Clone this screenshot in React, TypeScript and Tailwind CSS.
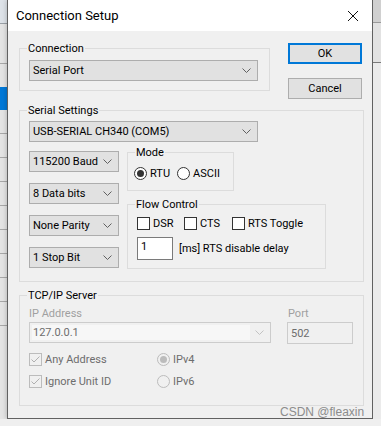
import React from "react";

const Chevron = ({ color = "#606060" }: { color?: string }) => (
  <svg width="9" height="5" viewBox="0 0 9 5" className="shrink-0">
    <polyline points="0.5,0.5 4.5,4.5 8.5,0.5" fill="none" stroke={color} strokeWidth="1" />
  </svg>
);

const Combo = ({ text, w }: { text: string; w: string }) => (
  <div className={`${w} h-[21px] flex items-center justify-between bg-[#e1e1e1] border border-[#adadad] pl-[3px] pr-[6px] text-[11px] leading-[13px] text-black`}>
    <span>{text}</span>
    <Chevron />
  </div>
);

const Radio = ({ checked, disabled, label }: { checked?: boolean; disabled?: boolean; label: string }) => (
  <div className={`flex items-center gap-[3px] text-[11px] leading-[13px] ${disabled ? "text-[#6d6d6d]" : "text-black"}`}>
    <div
      className={`w-[13px] h-[13px] rounded-full border flex items-center justify-center ${
        disabled ? "border-[#bcbcbc] bg-[#f0f0f0]" : "border-[#333333] bg-white"
      }`}
    >
      {checked && <div className={`w-[7px] h-[7px] rounded-full ${disabled ? "bg-[#bcbcbc]" : "bg-[#333333]"}`} />}
    </div>
    <span>{label}</span>
  </div>
);

const Check = ({ checked, disabled, label }: { checked?: boolean; disabled?: boolean; label: string }) => (
  <div className={`flex items-center gap-[3px] text-[11px] leading-[13px] ${disabled ? "text-[#6d6d6d]" : "text-black"}`}>
    <div
      className={`w-[13px] h-[13px] border flex items-center justify-center ${
        disabled ? "border-[#bcbcbc] bg-[#f0f0f0]" : "border-[#333333] bg-white"
      }`}
    >
      {checked && (
        <svg width="11" height="11" viewBox="0 0 11 11">
          <polyline points="1.5,5.5 4,8 9.5,2.5" fill="none" stroke={disabled ? "#b0b0b0" : "#333"} strokeWidth="1" />
        </svg>
      )}
    </div>
    <span>{label}</span>
  </div>
);

const Legend = ({ children }: { children: React.ReactNode }) => (
  <legend className="ml-[7px] px-[1px] text-[11px] leading-[13px] text-black">{children}</legend>
);

const LeftStrip = () => {
  const rows = [0, 1, 2, 3, 4, 5, 6, 7, 8];
  return (
    <div className="w-[7px] flex flex-col bg-[#e4e4e4]">
      <div className="h-[23px] bg-[#dde2e8]" />
      <div className="h-[1px] bg-[#9aa0a6]" />
      <div className="h-[39px]" />
      <div className="h-[1px] bg-[#a8a8a8]" />
      <div className="h-[23px]" />
      <div className="h-[23px] bg-[#0078d7]" />
      {rows.map((r) => (
        <div key={r} className="flex flex-col">
          <div className="h-[23px]" />
          <div className="h-[1px] bg-[#a8a8a8]" />
        </div>
      ))}
    </div>
  );
};

const RightStrip = () => (
  <div className="w-[8px] flex flex-col bg-[#ebebeb]">
    <div className="h-[22px] bg-[#d0d0d0]" />
    <div className="h-[1px] bg-[#9a9a9a]" />
    <div className="h-[39px] bg-[#e2e2e2]" />
    <div className="h-[1px] bg-[#7a7a7a]" />
  </div>
);

export default function App() {
  return (
    <div className="w-[381px] h-[426px] flex flex-col bg-[#eeeeee] overflow-hidden relative font-['Roboto',sans-serif]">
      <div className="flex h-[419px]">
        <LeftStrip />
        <div className="w-[367px] flex flex-col border-l border-r border-b border-[#616161] bg-[#f0f0f0] shadow-[0_0_5px_rgba(0,0,0,0.25)]">
          {/* Title bar */}
          <div className="h-[31px] bg-white flex items-center justify-between pl-[8px] pr-[10px]">
            <span className="text-[13px] leading-[16px] text-black">Connection Setup</span>
            <svg width="12" height="12" viewBox="0 0 12 12" className="mr-[3px]">
              <line x1="1" y1="1" x2="11" y2="11" stroke="#111" strokeWidth="1" />
              <line x1="11" y1="1" x2="1" y2="11" stroke="#111" strokeWidth="1" />
            </svg>
          </div>
          {/* Body */}
          <div className="flex flex-col pl-[11px] pt-[11px]">
            <div className="flex items-start">
              <fieldset className="w-[251px] h-[49px] border border-[#dcdcdc]">
                <Legend>Connection</Legend>
                <div className="mt-[5px] pl-[9px]">
                  <Combo text="Serial Port" w="w-[229px]" />
                </div>
              </fieldset>
              <div className="ml-[18px] mt-[1px] flex flex-col gap-[14px]">
                <button className="w-[74px] h-[21px] bg-[#e1e1e1] border-2 border-[#0078d7] text-[11px] leading-[13px] text-black flex items-center justify-center">
                  OK
                </button>
                <button className="w-[74px] h-[21px] bg-[#e1e1e1] border border-[#adadad] text-[11px] leading-[13px] text-black flex items-center justify-center">
                  Cancel
                </button>
              </div>
            </div>

            {/* Serial Settings */}
            <fieldset className="mt-[5px] w-[345px] h-[178px] border border-[#dcdcdc]">
              <Legend>Serial Settings</Legend>
              <div className="pl-[9px]">
                <div className="mt-[4px]">
                  <Combo text="USB-SERIAL CH340 (COM5)" w="w-[229px]" />
                </div>
                <div className="flex items-start gap-[8px]">
                  <div className="mt-[9px] flex flex-col gap-[11px]">
                    <Combo text="115200 Baud" w="w-[90px]" />
                    <Combo text="8 Data bits" w="w-[90px]" />
                    <Combo text="None Parity" w="w-[90px]" />
                    <Combo text="1 Stop Bit" w="w-[90px]" />
                  </div>
                  <div className="mt-[4px] flex flex-col gap-[7px]">
                    <fieldset className="w-[107px] h-[45px] border border-[#dcdcdc]">
                      <Legend>Mode</Legend>
                      <div className="mt-[8px] pl-[6px] flex items-center gap-[7px]">
                        <Radio checked label="RTU" />
                        <Radio label="ASCII" />
                      </div>
                    </fieldset>
                    <fieldset className="w-[199px] h-[71px] border border-[#dcdcdc]">
                      <Legend>Flow Control</Legend>
                      <div className="pl-[9px]">
                        <div className="mt-[6px] flex items-center">
                          <div className="w-[47px]">
                            <Check label="DSR" />
                          </div>
                          <div className="w-[48px]">
                            <Check label="CTS" />
                          </div>
                          <Check label="RTS Toggle" />
                        </div>
                        <div className="mt-[7px] flex items-center gap-[6px]">
                          <div className="w-[36px] h-[23px] bg-white border border-[#7a7a7a] pl-[3px] pt-[2px] text-[11px] leading-[13px] text-black">
                            1
                          </div>
                          <span className="text-[11px] leading-[13px] text-black">[ms] RTS disable delay</span>
                        </div>
                      </div>
                    </fieldset>
                  </div>
                </div>
              </div>
            </fieldset>

            {/* TCP/IP Server */}
            <fieldset className="mt-[7px] w-[345px] h-[117px] border border-[#dcdcdc]">
              <Legend>TCP/IP Server</Legend>
              <div className="pl-[9px]">
                <div className="mt-[5px] flex items-start">
                  <div className="flex flex-col w-[242px]">
                    <span className="text-[11px] leading-[13px] text-[#a0a0a0]">IP Address</span>
                    <div className="mt-[2px] h-[21px] border border-[#cccccc] bg-[#f0f0f0] flex items-center justify-between pl-[2px] pr-[6px]">
                      <div className="w-[218px] h-[15px] bg-[#f7f7f7] flex items-center pl-[1px] text-[11px] leading-[13px] text-[#6d6d6d]">
                        127.0.0.1
                      </div>
                      <Chevron color="#c2c2c2" />
                    </div>
                  </div>
                  <div className="ml-[16px] flex flex-col w-[66px]">
                    <span className="pl-[1px] text-[11px] leading-[13px] text-[#a0a0a0]">Port</span>
                    <div className="mt-[2px] h-[22px] border border-[#cccccc] bg-[#f0f0f0] flex items-center pl-[3px] text-[11px] leading-[13px] text-[#6d6d6d]">
                      502
                    </div>
                  </div>
                </div>
                <div className="mt-[9px] flex items-center">
                  <div className="w-[128px]">
                    <Check checked disabled label="Any Address" />
                  </div>
                  <Radio checked disabled label="IPv4" />
                </div>
                <div className="mt-[9px] flex items-center">
                  <div className="w-[128px]">
                    <Check checked disabled label="Ignore Unit ID" />
                  </div>
                  <Radio disabled label="IPv6" />
                </div>
              </div>
            </fieldset>
          </div>
        </div>
        <RightStrip />
      </div>
      <div className="h-[7px] bg-[#efefef]" />
      <span className="absolute left-[280px] top-[405px] text-[12px] leading-[14px] text-[#8c8c8c] font-['Liberation_Sans',sans-serif]">
        CSDN @fleaxin
      </span>
    </div>
  );
}
